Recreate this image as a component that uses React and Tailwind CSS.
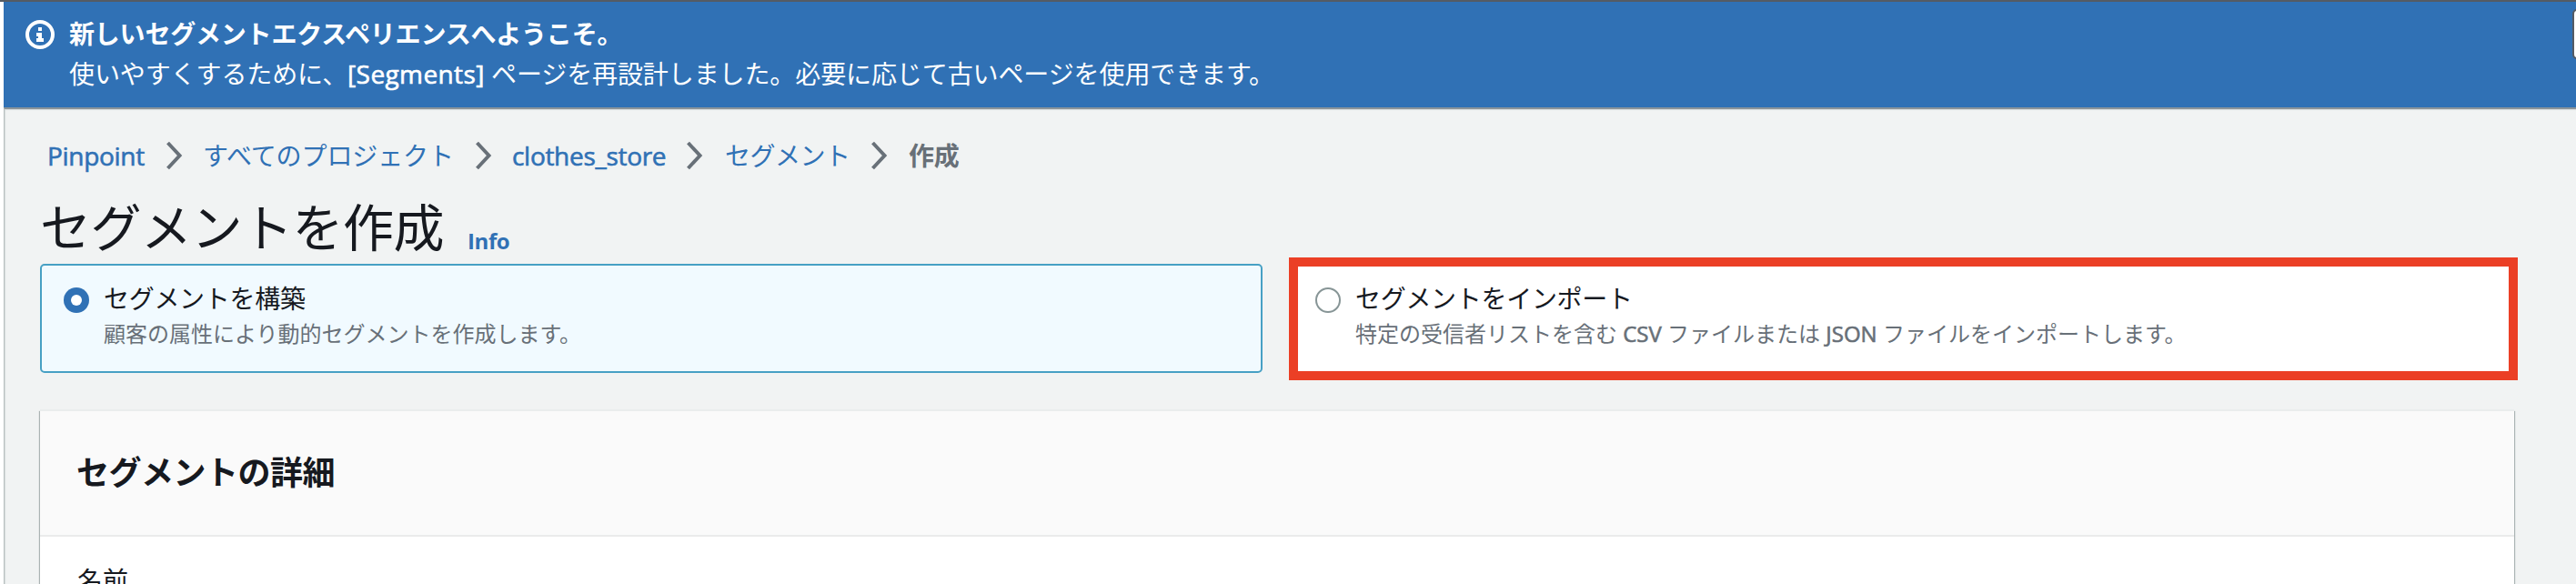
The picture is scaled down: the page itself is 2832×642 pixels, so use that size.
import React from "react";

const Chevron = ({ className }) => (
  <svg viewBox="0 0 20 32" className={"h-8 w-5 shrink-0 " + className} fill="none" stroke="#687078" strokeWidth="4">
    <path d="M2.5 2 L15.5 16 L2.5 30" />
  </svg>
);

const Latin = ({ className = "", children }) => (
  <span className={"font-['Open_Sans','Noto_Sans',sans-serif] font-medium [-webkit-text-stroke:0.6px_currentColor] " + className}>
    {children}
  </span>
);

const Banner = () => (
  <header className="flex h-[116px] w-full shrink-0 overflow-hidden bg-[#3071b5] text-white">
    <svg viewBox="0 0 32 32" className="mt-5 ml-6 h-8 w-8 shrink-0" fill="none">
      <circle cx="16" cy="16" r="14" stroke="white" strokeWidth="4" />
      <path d="M14 8h4v4h-4zM12 14h6v6h2v4h-8v-4h2v-2h-2z" fill="white" />
    </svg>
    <div className="ml-[16px] flex-1 pt-[13px] text-[28px] leading-[44px] whitespace-nowrap">
      <p className="font-bold tracking-[-0.2px]">新しいセグメントエクスペリエンスへようこそ。</p>
      <p className="tracking-[-0.1px]">
        使いやすくするために、<Latin className="tracking-[0.4px]">[Segments]</Latin> ページを再設計しました。必要に応じて古いページを使用できます。
      </p>
    </div>
    <div className="mt-2 -mr-4 h-[55px] w-5 rounded-[5px] border-2 border-[#545b64] bg-white" />
  </header>
);

const Breadcrumbs = () => (
  <nav className="flex h-[44px] items-center text-[28px] leading-[44px] whitespace-nowrap text-[#3071b5]">
    <a className="w-[130px]">
      <Latin className="tracking-[-0.3px]">Pinpoint</Latin>
    </a>
    <Chevron className="mr-[21px]" />
    <a className="w-[299px] tracking-[-0.1px]">すべてのプロジェクト</a>
    <Chevron className="mr-[21px]" />
    <a className="w-[191px]">
      <Latin className="tracking-[-0.3px]">clothes_store</Latin>
    </a>
    <Chevron className="mr-[23px]" />
    <a className="w-[160px] tracking-[-0.5px]">セグメント</a>
    <Chevron className="mr-[22px]" />
    <span className="font-bold tracking-[-0.3px] text-[#687078]">作成</span>
  </nav>
);

const OptionText = ({ title, children }) => (
  <div className="whitespace-nowrap">
    <p className="text-[28px] leading-[44px] tracking-[-0.3px] text-[#16191f]">{title}</p>
    <p className="text-2xl leading-[34px] text-[#687078]">{children}</p>
  </div>
);

export default function App() {
  return (
    <div
      lang="ja"
      className="flex h-[642px] w-[2832px] flex-col overflow-hidden bg-white font-['Noto_Sans','Noto_Sans_CJK_JP',sans-serif] text-[#16191f]"
    >
      <div className="h-0.5 w-full shrink-0 bg-[#545b64]" />
      <div className="flex min-h-0 flex-1 flex-col pl-1">
        <Banner />
        <main className="min-h-0 flex-1 border-t-2 border-l border-t-[#8a9499] border-l-[#b8bfc0] bg-[#f1f3f3] pl-[39px] shadow-[inset_1px_1px_1px_#d5dbdb]">
          <div className="pt-[29px] pl-[8px]">
            <Breadcrumbs />
          </div>
          <div className="mt-5 flex h-[77px] items-baseline whitespace-nowrap">
            <h1 className="w-[470px] text-[56px] leading-[73px] tracking-[-0.5px]">セグメントを作成</h1>
            <a className="font-['Open_Sans','Noto_Sans',sans-serif] text-2xl leading-[34px] font-bold tracking-[-0.4px] text-[#3071b5]">
              <span className="inline-block translate-y-[3px]">Info</span>
            </a>
          </div>
          <div className="-mt-[7px] flex h-[135px] items-start">
            <div className="mt-[7px] flex h-[120px] w-[1344px] rounded-[5px] border-2 border-[#47a0c4] bg-[#f1faff] pt-[14px] pl-6">
              <div className="mt-[10px] mr-4 flex h-7 w-7 shrink-0 items-center justify-center rounded-full bg-[#3071b5]">
                <div className="h-3 w-3 rounded-full bg-white" />
              </div>
              <OptionText title="セグメントを構築">顧客の属性により動的セグメントを作成します。</OptionText>
            </div>
            <div className="ml-[29px] flex h-[135px] w-[1351px] border-10 border-[#eb3f25] bg-white pt-[13px] pl-[19px]">
              <div className="mt-[10px] mr-4 h-7 w-7 shrink-0 rounded-full border-2 border-[#879596] bg-white" />
              <OptionText title="セグメントをインポート">
                特定の受信者リストを含む <Latin>CSV</Latin> ファイルまたは <Latin>JSON</Latin> ファイルをインポートします。
              </OptionText>
            </div>
          </div>
          <section className="mt-8 h-[240px] w-[2720px] border-t-2 border-[#eaeded] bg-white shadow-[1px_2px_1px_#aab3b3,-1px_2px_1px_#aab3b3]">
            <div className="flex h-[138px] items-center border-b-2 border-[#eaebeb] bg-[#fafafa] pl-[40px]">
              <h2 className="text-[36px] leading-[44px] font-bold tracking-[-0.5px]">セグメントの詳細</h2>
            </div>
            <div className="pt-[26px] pl-[41px] text-[28px] leading-[44px]">名前</div>
          </section>
        </main>
      </div>
    </div>
  );
}
